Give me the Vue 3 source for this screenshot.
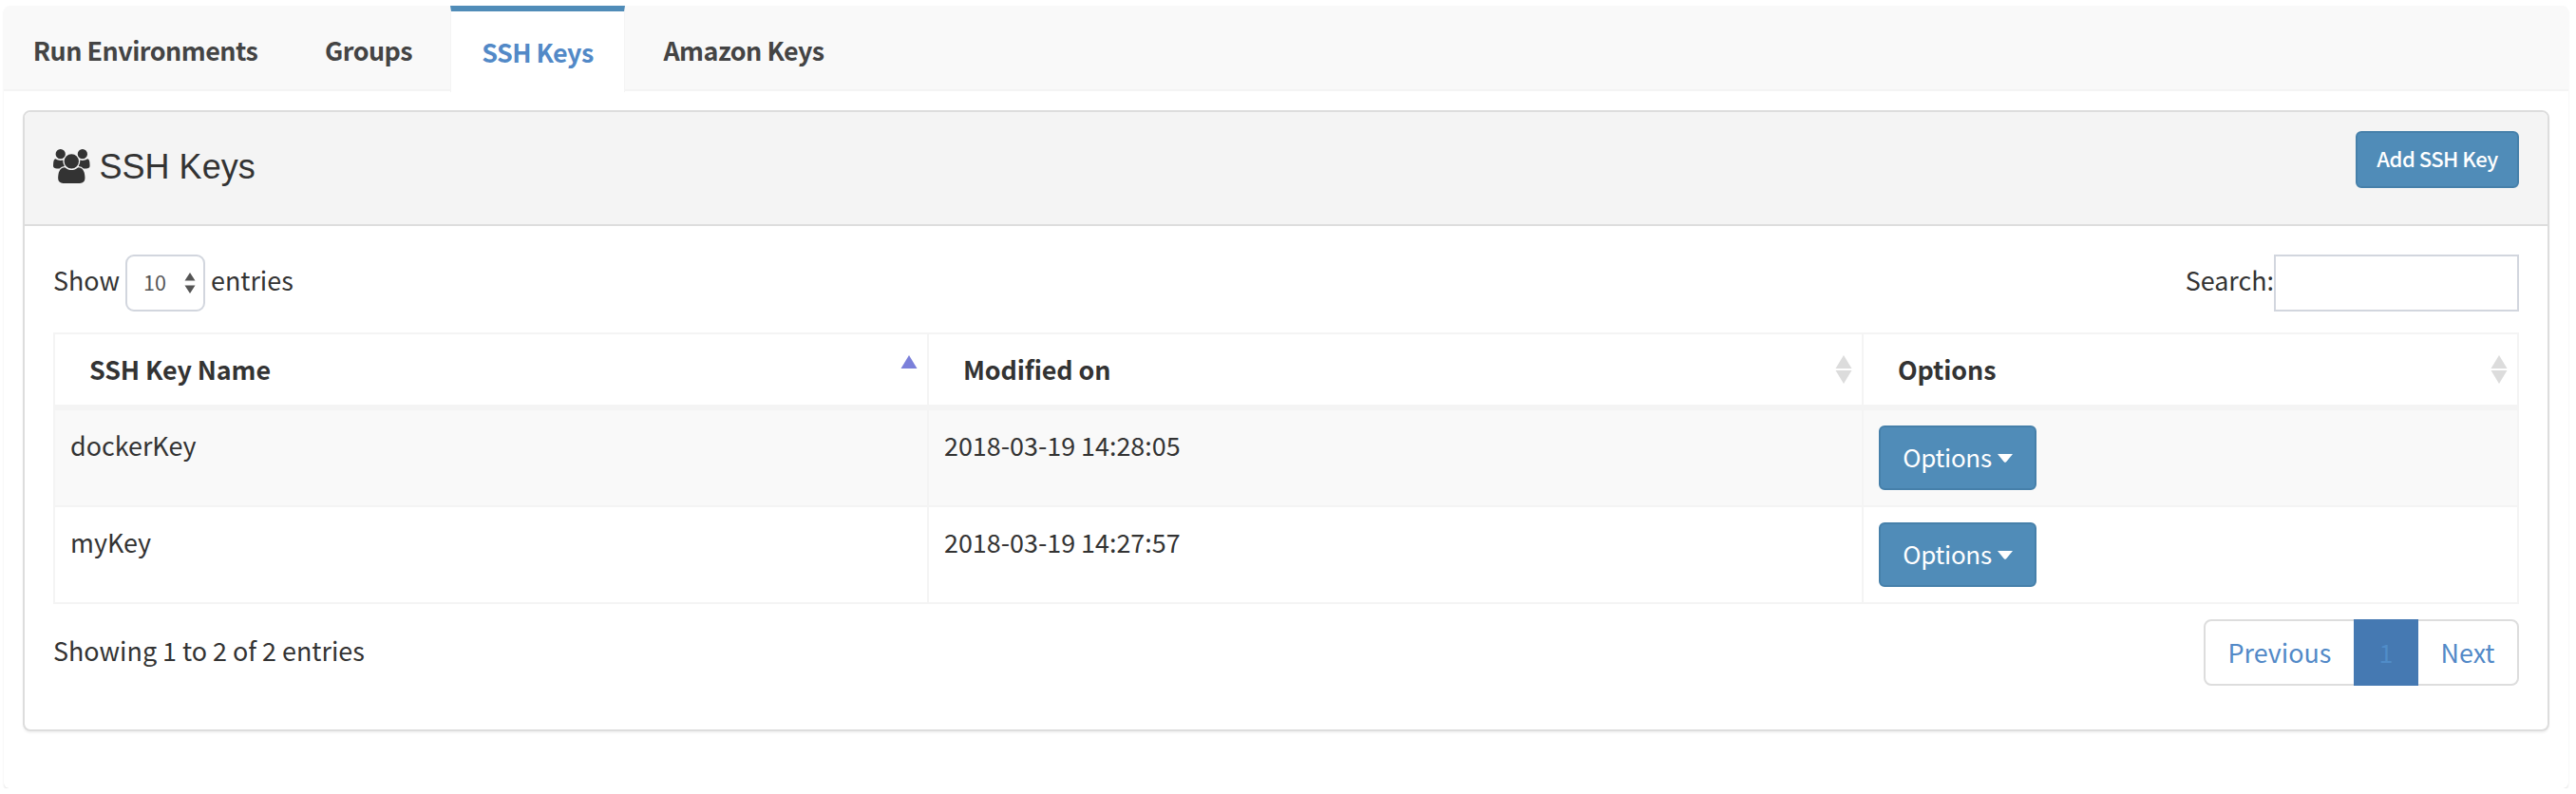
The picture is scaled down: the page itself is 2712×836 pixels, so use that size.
<script setup>
const tabs = ['Run Environments', 'Groups', 'SSH Keys', 'Amazon Keys']
const activeTab = 'SSH Keys'
const columns = [
  { label: 'SSH Key Name', sort: 'asc' },
  { label: 'Modified on', sort: 'none' },
  { label: 'Options', sort: 'none' },
]
const keys = [
  { name: 'dockerKey', modified: '2018-03-19 14:28:05' },
  { name: 'myKey', modified: '2018-03-19 14:27:57' },
]
</script>

<template>
  <main class="box">
    <nav class="tabs">
      <a v-for="t in tabs" :key="t" class="tab" :class="{ active: t === activeTab }"><span>{{ t }}</span></a>
    </nav>
    <section class="panel">
      <header class="panel-head">
        <h3 class="title">
          <svg class="users" viewBox="0 0 1920 1792"><path d="M593 896q-162 5-265 128h-134q-82 0-138-40.5t-56-118.5q0-353 124-353 6 0 43.5 21t97.5 42.5 119 21.5q67 0 133-23-5 37-5 66 0 139 81 256zm1071 637q0 120-73 189.5t-194 69.5h-874q-121 0-194-69.5t-73-189.5q0-53 3.5-103.5t14-109 26.5-108.5 43-97.5 62-81 85.5-53.5 111.5-20q10 0 43 21.5t73 48 107 48 135 21.5 135-21.5 107-48 73-48 43-21.5q61 0 111.5 20t85.5 53.5 62 81 43 97.5 26.5 108.5 14 109 3.5 103.5zm-1024-1277q0 106-75 181t-181 75-181-75-75-181 75-181 181-75 181 75 75 181zm704 384q0 159-112.5 271.5t-271.5 112.5-271.5-112.5-112.5-271.5 112.5-271.5 271.5-112.5 271.5 112.5 112.5 271.5zm576 225q0 78-56 118.5t-138 40.5h-134q-103-123-265-128 81-117 81-256 0-29-5-66 66 23 133 23 59 0 119-21.5t97.5-42.5 43.5-21q124 0 124 353zm-128-609q0 106-75 181t-181 75-181-75-75-181 75-181 181-75 181 75 75 181z" /></svg>
          <span>SSH Keys</span>
        </h3>
        <button class="btn btn-sm">Add SSH Key</button>
      </header>
      <div class="panel-body">
        <div class="controls">
          <div class="length">
            <span class="show">Show</span>
            <div class="select">
              <span>10</span>
              <svg width="12" height="22" viewBox="0 0 12 22"><path d="M6 0l5.5 8.5H.5zM6 22L.5 13.5h11z" /></svg>
            </div>
            <span>entries</span>
          </div>
          <label class="search"><span>Search:</span><input type="text" /></label>
        </div>
        <table class="grid">
          <colgroup><col class="c1" /><col class="c2" /><col class="c3" /></colgroup>
          <thead>
            <tr>
              <th v-for="c in columns" :key="c.label">
                <div class="th">
                  <span>{{ c.label }}</span>
                  <svg class="sort" :class="c.sort" width="18" height="30" viewBox="0 0 18 30">
                    <path d="M9 0l8.5 14H.5z" />
                    <path v-if="c.sort === 'none'" d="M9 30L.5 16h17z" />
                  </svg>
                </div>
              </th>
            </tr>
          </thead>
          <tbody>
            <tr v-for="k in keys" :key="k.name">
              <td>{{ k.name }}</td>
              <td>{{ k.modified }}</td>
              <td>
                <button class="btn btn-md">
                  <span>Options</span>
                  <svg width="16" height="9" viewBox="0 0 16 9"><path d="M0 0h16L9.2 8.2q-1.2 1.2-2.4 0z" /></svg>
                </button>
              </td>
            </tr>
          </tbody>
        </table>
        <div class="footer">
          <span class="info">Showing 1 to 2 of 2 entries</span>
          <div class="pages">
            <a class="prev"><span>Previous</span></a>
            <a class="current"><span>1</span></a>
            <a class="next"><span>Next</span></a>
          </div>
        </div>
      </div>
    </section>
  </main>
</template>

<style>
body { background: #fff; }
</style>

<style scoped>
* { box-sizing: border-box; }
.box {
  width: 2700px;
  height: 824px;
  margin: 6px 0 0 4px;
  background: #fff;
  border-radius: 6px;
  box-shadow: 0 2px 2px rgba(0, 0, 0, 0.1);
  font-family: "Noto Sans CJK SC", "Open Sans", sans-serif;
  font-size: 26.9px;
  line-height: 39px;
  color: #333;
}
.tabs {
  display: grid;
  grid-template-columns: 298px 172px 184px 250px;
  height: 90px;
  background: #f9f9f9;
  border-bottom: 2px solid #f4f4f4;
  border-radius: 6px 6px 0 0;
}
.tab {
  display: flex;
  justify-content: center;
  height: 88px;
  padding-top: 27px;
  color: #444;
  font-weight: 700;
  white-space: nowrap;
  letter-spacing: -0.52px;
}
.tab.active {
  height: 91px;
  padding-top: 23px;
  color: #5289c7;
  background: #fff;
  border-top: 6px solid #508cb8;
  border-left: 1px solid #f4f4f4;
  border-right: 1px solid #f4f4f4;
}
.panel {
  width: 2660px;
  height: 654px;
  margin: 20px 0 0 20px;
  border: 2px solid #ddd;
  border-radius: 8px;
  background: #fff;
  box-shadow: 0 2px 2px rgba(0, 0, 0, 0.05);
}
.panel-head {
  display: flex;
  justify-content: space-between;
  align-items: flex-start;
  height: 120px;
  padding: 20px 30px;
  background: #f4f4f4;
  border-bottom: 2px solid #ddd;
  border-radius: 6px 6px 0 0;
}
.title {
  display: flex;
  gap: 10px;
  margin: 14px 0 0;
  font: 400 36px/47px "Liberation Sans", sans-serif;
}
.users {
  width: 38.6px;
  height: 36px;
  margin-top: 5px;
  fill: #333;
}
.btn {
  display: flex;
  justify-content: center;
  border: 2px solid #4680aa;
  border-radius: 6px;
  background: #508cb8;
  color: #fff;
  font-family: inherit;
  padding: 0;
  white-space: nowrap;
}
.btn-sm {
  width: 172px;
  height: 60px;
  padding-top: 6px;
  font-size: 22px;
  font-weight: 500;
  line-height: 40px;
  letter-spacing: -0.5px;
}
.btn-md {
  width: 166px;
  height: 68px;
  padding-top: 11px;
  gap: 6px;
  font-size: 26px;
  line-height: 39px;
  letter-spacing: -0.3px;
}
.btn-md svg { margin-top: 17px; fill: #fff; }
.panel-body { padding: 30px; }
.controls {
  display: flex;
  justify-content: space-between;
  height: 60px;
}
.length, .search { display: flex; }
.length > span, .search > span { margin-top: 7px; }
.length { gap: 6px; }
.length .show { width: 70px; }
.select {
  display: flex;
  justify-content: space-between;
  width: 84px;
  height: 60px;
  padding: 7px 8px 0 17px;
  border: 2px solid #d2d6de;
  border-radius: 9px;
  font-size: 21.5px;
  color: #555;
}
.select svg { margin-top: 10px; fill: #555; }
.search input {
  width: 258px;
  height: 60px;
  border: 2px solid #d2d6de;
  background: #fff;
}
.grid {
  width: 2596px;
  margin-top: 22px;
  table-layout: fixed;
  border-collapse: separate;
  border-spacing: 0;
  border-top: 2px solid #f4f4f4;
  border-left: 2px solid #f4f4f4;
}
.c1 { width: 920px; }
.c2 { width: 984px; }
.c3 { width: 690px; }
th, td {
  padding: 0;
  border-right: 2px solid #f4f4f4;
  text-align: left;
  vertical-align: top;
}
th { height: 80px; border-bottom: 6px solid #f4f4f4; letter-spacing: -0.1px; }
.th {
  display: flex;
  justify-content: space-between;
  padding: 17px 10px 0 36px;
}
.sort { margin-top: 5px; fill: #dcdcdc; }
.sort.asc { fill: #7b80da; }
td { height: 102px; padding: 17px 0 0 16px; border-bottom: 2px solid #f4f4f4; }
td:last-child { padding-top: 16px; }
tbody tr:nth-child(odd) td { background: #f9f9f9; }
.footer {
  display: flex;
  justify-content: space-between;
  margin-top: 16px;
}
.info { padding-top: 13px; }
.pages {
  display: flex;
  width: 332px;
  height: 70px;
  border: 2px solid #ddd;
  border-radius: 8px;
  color: #5289c7;
}
.pages a {
  display: flex;
  justify-content: center;
  padding-top: 13px;
}
.prev { width: 156px; }
.pages .current {
  width: 68px;
  height: 70px;
  margin: -2px 0;
  padding-top: 15px;
  background: #4579b2;
  color: #508cc8;
}
.next { width: 104px; }
</style>
